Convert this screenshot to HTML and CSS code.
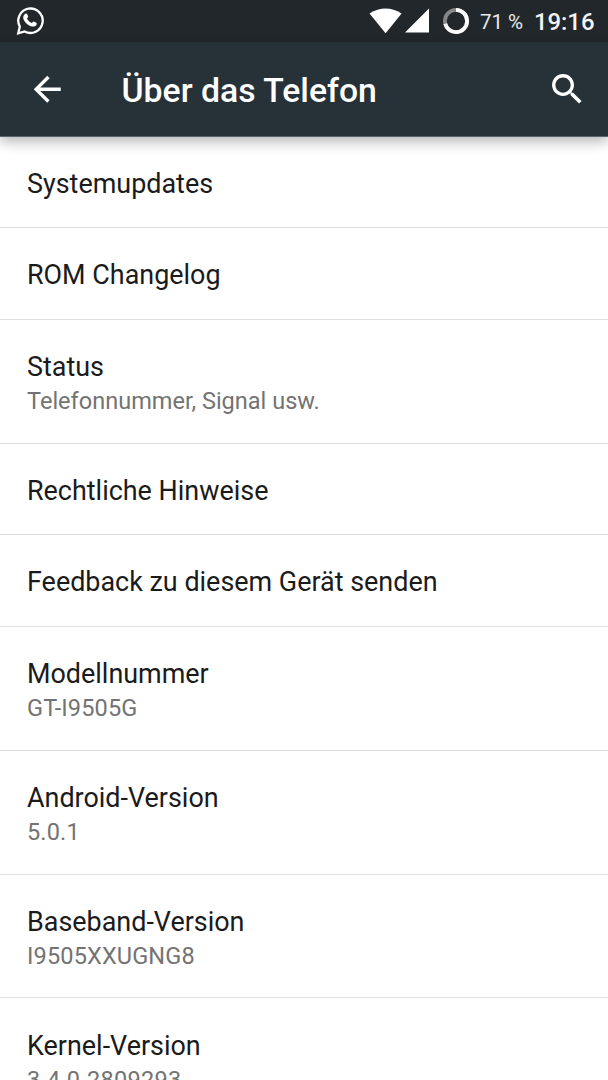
FILE: index.html
```html
<!DOCTYPE html>
<html lang="de">
<head>
<meta charset="utf-8">
<title>Über das Telefon</title>
<link rel="stylesheet" href="styles.css">
</head>
<body>
<div class="screen">
  <div class="statusbar">
    <svg class="whatsapp" width="28" height="30" viewBox="0 0 28 30">
      <path d="M2.200 27.400 3.800 20.600A12.200 12.200 0 1 1 8.600 25.400Z" fill="none" stroke="#fff" stroke-width="2.300"/>
      <path d="M9.600 7.500c.8-.3 1.300 0 1.600.7l1 2.400c.2.6-.8 1.500-1.200 2 1.100 2.100 2.700 3.500 4.900 4.400.6-.5 1.200-1.800 1.900-1.500l2.600 1.300c.6.4.4 1.600-.1 2.400-.8 1-2.500 1.600-3.900 1.300-4.300-1-7.700-3.900-9-7.600-.7-2 .4-4.600 2.200-5.400z" fill="#fff"/>
    </svg>
    <div class="indicators">
      <svg class="wifi" width="33" height="26" viewBox="0 0 33 26"><path d="M.5 5.500Q16.500-4.300 32.600 5.500L16.600 25.300Z" fill="#fff"/></svg>
      <svg class="signal" width="24" height="25" viewBox="0 0 24 25"><path d="M24 .5V24.500H0Z" fill="#fff"/></svg>
      <svg class="battery" width="26" height="26" viewBox="0 0 26 26">
        <circle cx="13" cy="13" r="11.100" fill="none" stroke="#858789" stroke-width="3.800"/>
        <circle cx="13" cy="13" r="11.100" fill="none" stroke="#fff" stroke-width="3.800" pathLength="100" stroke-dasharray="71 29" transform="rotate(-90 13 13)"/>
      </svg>
      <span class="percent">71 %</span>
      <span class="clock">19:16</span>
    </div>
  </div>
  <header class="appbar">
    <svg class="icon" viewBox="0 0 24 24"><path d="M20 11H7.830l5.590-5.590L12 4l-8 8 8 8 1.410-1.410L7.830 13H20v-2z" fill="#fff"/></svg>
    <h1 class="title">Über das Telefon</h1>
    <svg class="icon" viewBox="0 0 24 24"><path d="M15.500 14h-.79l-.28-.27C15.410 12.590 16 11.110 16 9.500 16 5.910 13.090 3 9.500 3S3 5.910 3 9.500 5.910 16 9.500 16c1.610 0 3.090-.59 4.230-1.570l.27.28v.79l5 4.990L20.490 19l-4.990-5zm-6 0C7.010 14 5 11.990 5 9.500S7.010 5 9.500 5 14 7.010 14 9.500 11.990 14 9.500 14z" fill="#fff"/></svg>
  </header>
  <main class="list">
    <div class="row"><div class="name">Systemupdates</div></div>
    <div class="row"><div class="name">ROM Changelog</div></div>
    <div class="row double"><div class="name">Status</div><div class="summary">Telefonnummer, Signal usw.</div></div>
    <div class="row"><div class="name">Rechtliche Hinweise</div></div>
    <div class="row"><div class="name">Feedback zu diesem Gerät senden</div></div>
    <div class="row double"><div class="name">Modellnummer</div><div class="summary code">GT-I9505G</div></div>
    <div class="row double"><div class="name">Android-Version</div><div class="summary code">5.0.1</div></div>
    <div class="row double"><div class="name">Baseband-Version</div><div class="summary code">I9505XXUGNG8</div></div>
    <div class="row double"><div class="name">Kernel-Version</div><div class="summary kernel">3.4.0-2809293</div></div>
  </main>
</div>
</body>
</html>
```
FILE: styles.css
```css
* { box-sizing: border-box; }
body { margin: 0; background: #fff; font-family: Roboto, "Liberation Sans", sans-serif; }
svg { display: block; flex: none; }
.screen { height: 1080px; overflow: hidden; display: flex; flex-direction: column; }
.statusbar {
  flex: none; height: 42px; padding: 0 13.5px 0 16px; background: #21272b; color: #fff;
  display: flex; justify-content: space-between; align-items: flex-start;
}
.whatsapp { margin-top: 6px; }
.indicators { display: flex; align-items: flex-start; height: 42px; }
.wifi { margin-top: 8px; }
.signal { margin: 8px 0 0 3px; }
.battery { margin: 8px 0 0 14px; }
.percent { margin-left: 10.5px; width: 43px; font-size: 20.500px; line-height: 45px; white-space: nowrap; color: #e9eaea; }
.clock { margin-left: 11px; font-size: 23.900px; font-weight: 500; line-height: 45px; color: #f4f4f4; }
.appbar {
  flex: none; height: 95px; padding: 0 20.700px 0 27px; background: #263238;
  border-bottom: 1px solid #5b6468; box-shadow: 0 5px 12px rgba(0, 0, 0, .28);
  display: flex; align-items: center; position: relative;
}
.icon { width: 40.500px; height: 40.500px; }
.title { flex: 1; margin: 4px 0 0 54px; font-size: 33.780px; line-height: 40px; font-weight: 500; color: #fff; white-space: nowrap; }
.list { flex: none; margin-top: -.6px; }
.row { height: 91.700px; padding: 31.200px 27px 0; border-bottom: 1px solid #dedede; }
.row.double { height: 123.800px; }
.name { font-size: 26.930px; line-height: 32px; color: #1b1b1b; }
.summary { font-size: 23.540px; line-height: 28px; margin-top: 4px; color: #737373; }
.summary.code { letter-spacing: .14px; }
.summary.kernel { letter-spacing: .25px; }
```
